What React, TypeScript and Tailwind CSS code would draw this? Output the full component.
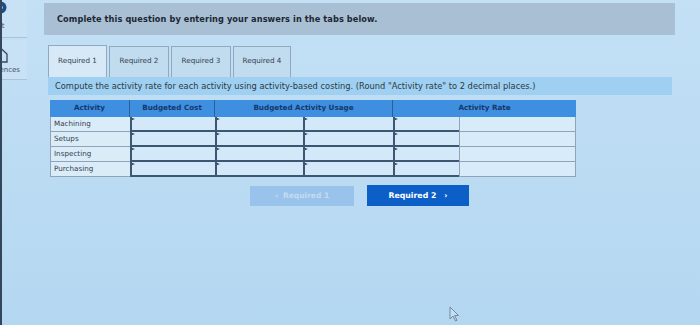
import React from "react";

// Activity rows for the costing worksheet
const activities = ["Machining", "Setups", "Inspecting", "Purchasing"];

const tabs = [
  { label: "Required 1", w: "w-[59px]", active: true },
  { label: "Required 2", w: "w-[60px]", active: false },
  { label: "Required 3", w: "w-[60px]", active: false },
  { label: "Required 4", w: "w-[58px]", active: false },
];

// Editable cell with the little marker in its top-left corner
const InputCell: React.FC<{ w: string }> = ({ w }) => (
  <div className={`relative ${w} h-full border-l-2 border-b-2 border-[#3d5671] bg-[#d3e8f8]`}>
    <span className="absolute left-0 top-[1px] h-0 w-0 border-y-[1.5px] border-l-[3px] border-y-transparent border-l-[#1f3550]" />
  </div>
);

const App: React.FC = () => {
  return (
    <div className="relative flex h-[325px] w-[700px] overflow-hidden bg-gradient-to-b from-[#c3e0f5] to-[#b4d7f1] font-['DejaVu_Sans',sans-serif] text-[#22313f]">
      {/* Side menu, clipped at the window edge */}
      <aside className="w-[27px] shrink-0 overflow-hidden border-l-2 border-[#34465c]">
        <div className="-ml-[32px] w-[62px]">
          <div className="flex h-[38px] flex-col items-center border-r border-b border-[#a9c3d8] bg-[#c8e1f4] pt-[1px]">
            <svg width="13" height="13" viewBox="0 0 13 13">
              <circle cx="6.5" cy="6.5" r="6" fill="#1e4c86" />
              <circle cx="6.5" cy="6.5" r="2.2" fill="#c8e1f4" />
            </svg>
            <span className="-ml-[8px] mt-[9px] text-[7px] leading-none text-[#41556a]">Print</span>
          </div>
          <div className="mt-[2px] flex h-[40px] flex-col items-center border-r border-b border-[#a9c3d8] bg-[#c8e1f4] pt-[7px]">
            <svg width="16" height="16" viewBox="0 0 16 16">
              <path d="M2 7 L8 1.5 L14 7 V15 H2 Z" fill="none" stroke="#33475c" strokeWidth="1.3" />
            </svg>
            <span className="mt-[4px] text-[7px] leading-none text-[#41556a]">References</span>
          </div>
        </div>
      </aside>

      <main className="flex-1 pl-[17px] pr-[25px] pt-[3px]">
        {/* Instructions header */}
        <div className="flex h-[32px] items-center bg-[#a9bfd3] px-[13px]">
          <p className="text-[8.2px] font-bold tracking-[0.1px] text-[#1c2733]">
            Complete this question by entering your answers in the tabs below.
          </p>
        </div>

        {/* Tabs */}
        <div className="ml-[4px] mt-[10px] flex items-end gap-[2px]">
          {tabs.map((t) => (
            <div
              key={t.label}
              className={`${t.w} flex items-center justify-center border border-b-0 border-[#8fa9c0] text-[7.2px] ${
                t.active ? "h-[32px] bg-[#d7e9f7]" : "h-[31px] bg-[#c1dbef]"
              }`}
            >
              <span className="-mt-[1px] text-[#33414f]">{t.label}</span>
            </div>
          ))}
        </div>

        {/* Prompt bar */}
        <div className="ml-[4px] flex h-[18px] w-[624px] items-center bg-[#9fd0f1] px-[7px]">
          <p className="whitespace-nowrap text-[8.3px] text-[#2c3946]">
            Compute the activity rate for each activity using activity-based costing. (Round "Activity rate" to 2 decimal places.)
          </p>
        </div>

        {/* Worksheet table */}
        <div className="ml-[6px] mt-[5px] w-[526px]">
          <div className="flex h-[17px] bg-[#3f8fe0] text-[7.2px] font-bold text-[#15386b]">
            <div className="flex w-[80px] items-center justify-center border-r border-[#2c5f96]">Activity</div>
            <div className="flex w-[85px] items-center justify-center border-r border-[#2c5f96]">Budgeted Cost</div>
            <div className="flex w-[178px] items-center justify-center border-r border-[#2c5f96]">Budgeted Activity Usage</div>
            <div className="flex w-[183px] items-center justify-center">Activity Rate</div>
          </div>
          {activities.map((a) => (
            <div key={a} className="flex h-[15px]">
              <div className="flex w-[80px] items-center border-l border-b border-[#8fa4b8] bg-[#dbecf9] px-[3px] text-[7.2px] text-[#34414d]">
                {a}
              </div>
              <InputCell w="w-[85px]" />
              <InputCell w="w-[88px]" />
              <InputCell w="w-[90px]" />
              <InputCell w="w-[66px]" />
              <div className="h-full w-[117px] border-l border-r border-b border-[#8fa4b8] bg-[#d8ebf9]" />
            </div>
          ))}
        </div>

        {/* Navigation buttons */}
        <div className="mt-[8px] flex items-center justify-center gap-[13px]">
          <div className="flex h-[20px] w-[104px] items-center justify-center gap-[5px] bg-[#99c3ea] text-[7.5px] font-bold text-[#c4dcf1]">
            <span>‹</span>
            <span>Required 1</span>
          </div>
          <div className="flex h-[21px] w-[102px] items-center justify-center gap-[8px] bg-[#0c5fc7] text-[7.8px] font-bold text-white">
            <span>Required 2</span>
            <span>›</span>
          </div>
        </div>
      </main>

      {/* Mouse pointer */}
      <svg className="absolute left-[449px] top-[306px]" width="11" height="16" viewBox="0 0 11 16">
        <path d="M1 1 V13 L4 10 L6.5 15 L8 14.3 L5.6 9.5 H9.5 Z" fill="#c4e0f5" stroke="#6b7f92" strokeWidth="0.9" />
      </svg>
    </div>
  );
};

export default App;
